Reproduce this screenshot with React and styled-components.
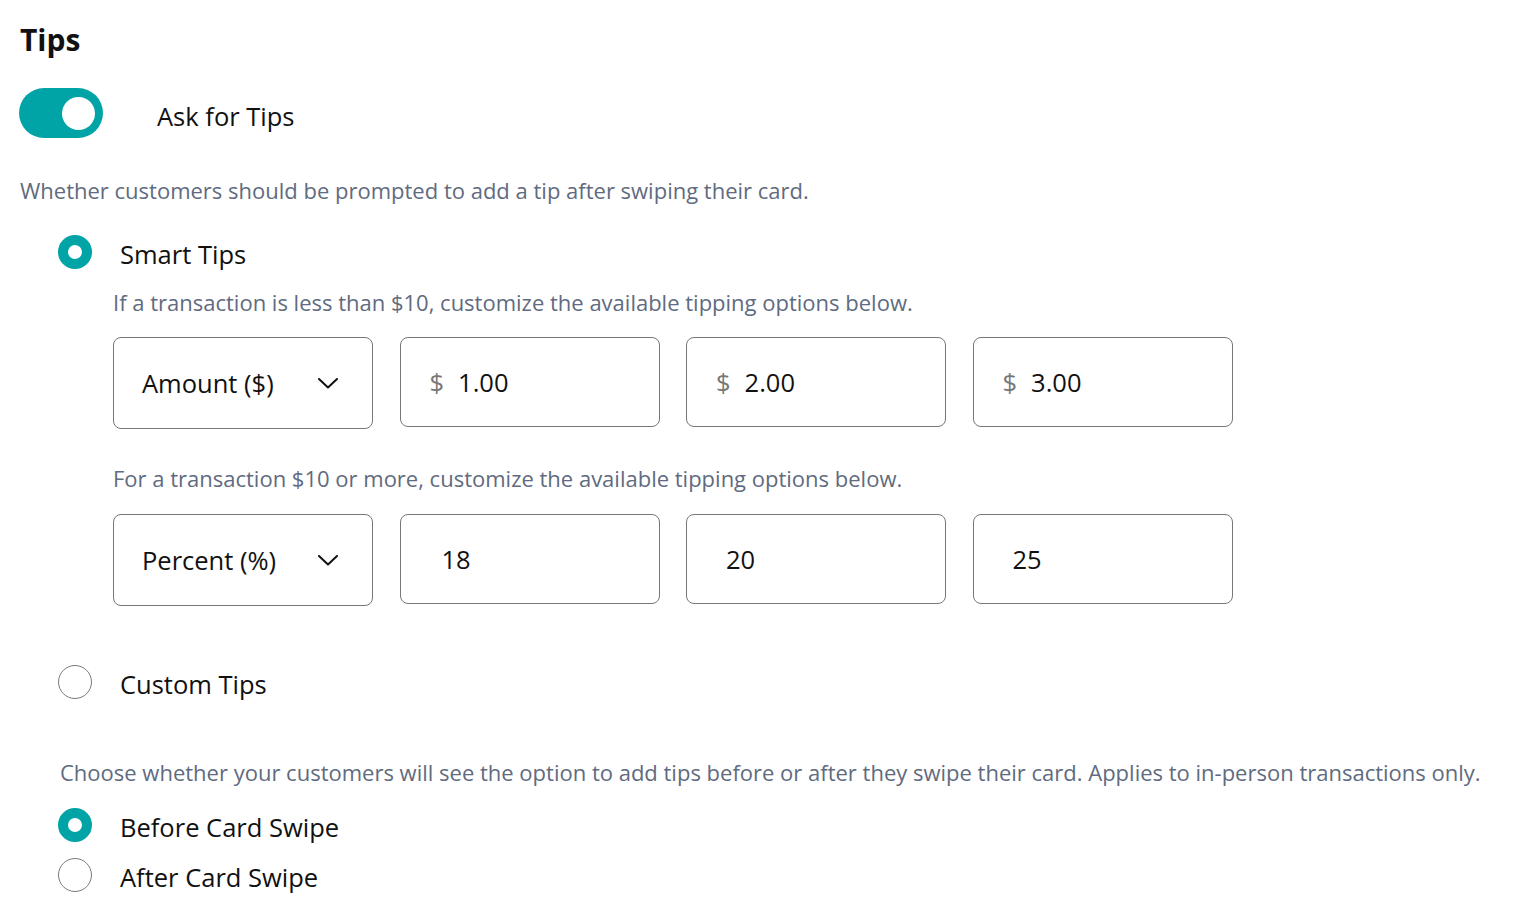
import React from 'react';
import styled, { createGlobalStyle } from 'styled-components';

const GlobalStyle = createGlobalStyle`
  body {
    margin: 0;
    background: #fff;
    font-family: "Open Sans", "Noto Sans", sans-serif;
    color: #111;
  }
`;

const TEAL = '#00a4a6';

export default function App() {
  return (
    <Page>
      <GlobalStyle />
      <Title>Tips</Title>
      <ToggleRow>
        <Toggle on>
          <Knob />
        </Toggle>
        <ToggleLabel>Ask for Tips</ToggleLabel>
      </ToggleRow>
      <Description>Whether customers should be prompted to add a tip after swiping their card.</Description>

      <Options>
        <RadioRow top={31}>
          <Radio checked />
          <RadioLabel>Smart Tips</RadioLabel>
        </RadioRow>
        <SubBlock>
          <SubText top={19}>If a transaction is less than $10, customize the available tipping options below.</SubText>
          <FieldRow top={21}>
            <Select>
              <span>Amount ($)</span>
              <Chevron />
            </Select>
            <AmountInput value="1.00" />
            <AmountInput value="2.00" />
            <AmountInput value="3.00" />
          </FieldRow>
          <SubText top={35}>For a transaction $10 or more, customize the available tipping options below.</SubText>
          <FieldRow top={22}>
            <Select>
              <span>Percent (%)</span>
              <Chevron />
            </Select>
            <Field pad={41}>18</Field>
            <Field pad={39}>20</Field>
            <Field pad={39}>25</Field>
          </FieldRow>
        </SubBlock>
        <RadioRow top={59}>
          <Radio />
          <RadioLabel>Custom Tips</RadioLabel>
        </RadioRow>
      </Options>

      <Note>Choose whether your customers will see the option to add tips before or after they swipe their card. Applies to in-person transactions only.</Note>
      <Options>
        <RadioRow top={22}>
          <Radio checked />
          <RadioLabel>Before Card Swipe</RadioLabel>
        </RadioRow>
        <RadioRow top={16}>
          <Radio />
          <RadioLabel>After Card Swipe</RadioLabel>
        </RadioRow>
      </Options>
    </Page>
  );
}

function Chevron() {
  return (
    <svg width="20" height="11" viewBox="0 0 20 11" fill="none">
      <polyline points="1,1 10,9.5 19,1" stroke="#111" strokeWidth="2" strokeLinecap="round" strokeLinejoin="round" />
    </svg>
  );
}

function AmountInput({ value }) {
  return (
    <Field pad={29}>
      <Currency>$</Currency>
      <span>{value}</span>
    </Field>
  );
}

const Page = styled.div`
  display: flex;
  flex-direction: column;
  padding: 22px 20px 20px;
`;

const Title = styled.h1`
  margin: 0;
  font-size: 30px;
  line-height: 36px;
  font-weight: 700;
  color: #111;
`;

const ToggleRow = styled.div`
  display: flex;
  align-items: center;
  gap: 54px;
  margin-top: 30px;
  margin-left: -1px;
`;

const Toggle = styled.div`
  width: 84px;
  height: 50px;
  border-radius: 25px;
  background: ${(p) => (p.on ? TEAL : '#ccc')};
  display: flex;
  align-items: center;
  justify-content: ${(p) => (p.on ? 'flex-end' : 'flex-start')};
  padding: 0 8px;
  box-sizing: border-box;
`;

const Knob = styled.div`
  width: 33px;
  height: 33px;
  border-radius: 50%;
  background: #fff;
`;

const ToggleLabel = styled.div`
  font-size: 25.5px;
  line-height: 32px;
  padding-top: 5px;
`;

const Description = styled.p`
  margin: 38px 0 0;
  font-size: 22px;
  line-height: 28px;
  color: #5f6b80;
`;

const Options = styled.div`
  display: flex;
  flex-direction: column;
  padding-left: 38px;
`;

const RadioRow = styled.div`
  display: flex;
  align-items: center;
  gap: 28px;
  height: 34px;
  margin-top: ${(p) => p.top}px;
`;

const Radio = styled.span`
  width: 34px;
  height: 34px;
  border-radius: 50%;
  box-sizing: border-box;
  flex-shrink: 0;
  background: #fff;
  border: ${(p) => (p.checked ? `10px solid ${TEAL}` : '1.5px solid #7a7a7a')};
`;

const RadioLabel = styled.span`
  font-size: 25.5px;
  line-height: 28px;
  padding-top: 4px;
  color: #111;
`;

const SubBlock = styled.div`
  display: flex;
  flex-direction: column;
  padding-left: 55px;
`;

const SubText = styled.p`
  margin: ${(p) => p.top}px 0 0;
  font-size: 22px;
  line-height: 28px;
  color: #5f6b80;
`;

const FieldRow = styled.div`
  display: flex;
  align-items: flex-start;
  gap: 26.5px;
  margin-top: ${(p) => p.top}px;
`;

const Box = styled.div`
  width: 260px;
  box-sizing: border-box;
  border: 1px solid #777;
  border-radius: 8px;
  display: flex;
  align-items: center;
  font-size: 25.5px;
  color: #111;
`;

const Select = styled(Box)`
  height: 92px;
  justify-content: space-between;
  padding: 0 34px 0 28px;
`;

const Field = styled(Box)`
  height: 90px;
  padding-left: ${(p) => p.pad}px;
  gap: 14px;
`;

const Currency = styled.span`
  color: #777;
`;

const Note = styled.p`
  margin: 59px 0 0 40px;
  font-size: 22px;
  line-height: 28px;
  color: #5f6b80;
`;
